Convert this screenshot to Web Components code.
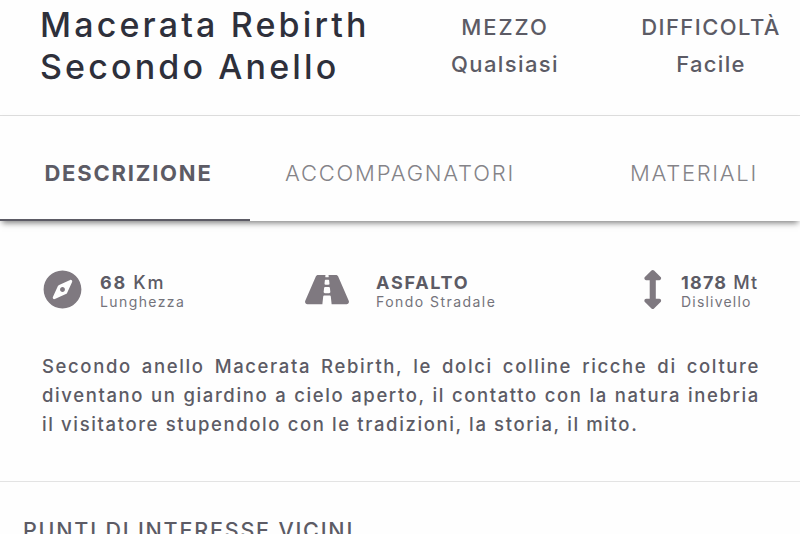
<!DOCTYPE html>
<html lang="it">
<head>
<meta charset="utf-8">
<title>Macerata Rebirth Secondo Anello</title>
<style>
  html, body { margin: 0; }
  body {
    height: 534px;
    overflow: hidden;
    background: #fefefe;
    color: #5c5b65;
    font-family: Inter, "Open Sans", sans-serif;
  }
</style>
</head>
<body>
<route-page></route-page>

<script>
const define = (name, html) => {
  const template = document.createElement('template');
  template.innerHTML = html;

  customElements.define(name, class extends HTMLElement {
    constructor() {
      super();
      this.attachShadow({ mode: 'open' });
      this.shadowRoot.appendChild(template.content.cloneNode(true));
    }
  });
};

define('route-header', `
  <style>
    :host {
      display: grid;
      grid-template-columns: 402px 206px 206px;
      box-sizing: border-box;
      height: 116px;
      padding-top: 4px;
      border-bottom: 1px solid #dedede;
      overflow: hidden;
    }
    h1 {
      margin: 0;
      padding-left: 40px;
      color: #2e303b;
      font-size: 34px;
      font-weight: 500;
      line-height: 42px;
      white-space: nowrap;
    }
    h1 ::slotted(*) { display: block; }
  </style>
  <h1><slot name="title"></slot></h1>
  <slot></slot>
`);

define('route-meta', `
  <style>
    :host {
      display: flex;
      flex-direction: column;
      align-items: center;
      padding-top: 5px;
      font-size: 22px;
      font-weight: 500;
      line-height: 37px;
      white-space: nowrap;
    }
  </style>
  <slot name="label"></slot>
  <slot></slot>
`);

define('route-tabs', `
  <style>
    :host {
      display: grid;
      grid-template-columns: 250px 300px 1fr;
      height: 105px;
      background: #fefefe;
      box-shadow: 0 4px 6px -2px rgba(0, 0, 0, .5);
    }
  </style>
  <slot></slot>
`);

define('route-tab', `
  <style>
    :host {
      display: flex;
      align-items: center;
      justify-content: center;
      box-sizing: border-box;
      padding-top: 10px;
      border-bottom: 2px solid transparent;
      color: #848388;
      font-size: 22px;
      font-weight: 300;
      line-height: 30px;
      white-space: nowrap;
    }
    :host([active]) {
      border-color: #5c5b65;
      color: #5c5b65;
      font-weight: 700;
    }
  </style>
  <slot></slot>
`);

define('route-stats', `
  <style>
    :host {
      display: grid;
      grid-template-columns: 262px 338px 1fr;
      padding: 48px 0 0 43px;
    }
  </style>
  <slot></slot>
`);

define('route-stat', `
  <style>
    :host {
      display: flex;
      white-space: nowrap;
    }
    .icon {
      display: flex;
      flex: none;
      align-items: center;
      width: var(--icon-column);
      height: 40px;
      color: #7f7980;
    }
    .value {
      height: 20px;
      padding-top: 4px;
      font-size: 18px;
      font-weight: 500;
      line-height: 20px;
    }
    .label {
      color: #74737b;
      font-size: 14px;
      line-height: 18px;
    }
  </style>
  <div class="icon"><slot name="icon"></slot></div>
  <div>
    <div class="value"><slot></slot></div>
    <div class="label"><slot name="label"></slot></div>
  </div>
`);

define('route-text', `
  <style>
    :host {
      display: block;
      box-sizing: border-box;
      height: 130px;
      margin-top: 41px;
      padding: 0 40px 0 42px;
      border-bottom: 1px solid #e3e3e3;
    }
    p {
      margin: 0;
      font-size: 18.5px;
      font-weight: 500;
      line-height: 29px;
      text-align: justify;
    }
  </style>
  <p><slot></slot></p>
`);

define('route-section', `
  <style>
    :host { display: block; padding: 33px 0 0 23px; }
    h2 {
      margin: 0;
      font-size: 21.5px;
      font-weight: 500;
      line-height: 30px;
      white-space: nowrap;
    }
  </style>
  <h2><slot></slot></h2>
`);

define('route-page', `
  <style>
    :host { display: block; }
    svg { display: block; fill: currentColor; }
    b { font-weight: 700; }
  </style>

  <route-header>
    <span slot="title" style="letter-spacing: 3.15px">Macerata Rebirth</span>
    <span slot="title" style="letter-spacing: 3.15px">Secondo Anello</span>
    <route-meta>
      <span slot="label" style="letter-spacing: 2px">MEZZO</span>
      <span style="letter-spacing: 1.4px">Qualsiasi</span>
    </route-meta>
    <route-meta>
      <span slot="label" style="letter-spacing: 1.45px">DIFFICOLTÀ</span>
      <span style="letter-spacing: 1.3px">Facile</span>
    </route-meta>
  </route-header>

  <route-tabs>
    <route-tab active><span style="letter-spacing: 1.8px; padding-left: 7px">DESCRIZIONE</span></route-tab>
    <route-tab><span style="letter-spacing: 1.8px">ACCOMPAGNATORI</span></route-tab>
    <route-tab><span style="letter-spacing: 1.7px; padding-left: 38px">MATERIALI</span></route-tab>
  </route-tabs>

  <route-stats>
    <route-stat style="--icon-column: 57px">
      <svg slot="icon" width="39" height="39" viewBox="0 0 496 512"><path d="M225.38 233.37c-12.5 12.5-12.5 32.76 0 45.25 12.49 12.5 32.76 12.5 45.25 0 12.5-12.5 12.5-32.76 0-45.25-12.5-12.49-32.76-12.49-45.25 0zM248 8C111.03 8 0 119.03 0 256s111.03 248 248 248 248-111.03 248-248S384.97 8 248 8zm126.14 148.05L308.17 300.4a31.938 31.938 0 0 1-15.77 15.77l-144.34 65.97c-16.65 7.61-33.81-9.55-26.2-26.2l65.98-144.35a31.938 31.938 0 0 1 15.77-15.77l144.34-65.97c16.65-7.6 33.8 9.55 26.19 26.2z"/></svg>
      <span style="letter-spacing: 1.7px"><b>68</b> Km</span>
      <span slot="label" style="letter-spacing: 1.4px">Lunghezza</span>
    </route-stat>
    <route-stat style="--icon-column: 71px">
      <svg slot="icon" width="44" height="39" viewBox="0 0 576 512"><path d="M573.19 402.67l-139.79-320C428.43 71.29 417.6 64 405.68 64h-97.59l2.45 23.16c.5 4.72-3.21 8.84-7.96 8.84h-29.16c-4.75 0-8.46-4.12-7.96-8.84L267.91 64h-97.59c-11.93 0-22.76 7.29-27.73 18.67L2.8 402.67C-6.45 423.86 8.31 448 30.54 448h196.84l10.31-97.68c.86-8.14 7.72-14.32 15.91-14.32h68.8c8.19 0 15.05 6.18 15.91 14.32L348.62 448h196.84c22.23 0 36.99-24.14 27.73-45.33zM260.4 135.16a8 8 0 0 1 7.96-7.16h39.29c4.09 0 7.53 3.09 7.96 7.16l4.6 43.58c.75 7.09-4.81 13.26-11.93 13.26h-40.54c-7.13 0-12.68-6.17-11.93-13.26l4.59-43.58zM315.64 304h-55.29c-9.5 0-16.91-8.23-15.91-17.68l5.07-48c.86-8.14 7.72-14.32 15.91-14.32h45.15c8.19 0 15.05 6.18 15.91 14.32l5.07 48c1 9.45-6.41 17.68-15.91 17.68z"/></svg>
      <b style="letter-spacing: 1.75px">ASFALTO</b>
      <span slot="label" style="letter-spacing: 1.45px">Fondo Stradale</span>
    </route-stat>
    <route-stat style="--icon-column: 38px">
      <svg slot="icon" width="19.5" height="39" viewBox="0 0 256 512"><path d="M214.059 377.941H168V134.059h46.059c21.382 0 32.09-25.851 16.971-40.971L144.971 7.029c-9.373-9.373-24.568-9.373-33.941 0L24.971 93.088c-15.119 15.119-4.411 40.971 16.971 40.971H88v243.882H41.941c-21.382 0-32.09 25.851-16.971 40.971l86.059 86.059c9.373 9.373 24.568 9.373 33.941 0l86.059-86.059c15.12-15.119 4.412-40.971-16.97-40.971z"/></svg>
      <span style="letter-spacing: 1.2px"><b>1878</b> Mt</span>
      <span slot="label" style="letter-spacing: 1.2px">Dislivello</span>
    </route-stat>
  </route-stats>

  <route-text><span style="letter-spacing: 1.62px">Secondo anello Macerata Rebirth, le dolci colline ricche di colture diventano un giardino a cielo aperto, il contatto con la natura inebria il visitatore stupendolo con le tradizioni, la storia, il mito.</span></route-text>

  <route-section><span style="letter-spacing: 1.8px">PUNTI DI INTERESSE VICINI</span></route-section>
`);
</script>
</body>
</html>
